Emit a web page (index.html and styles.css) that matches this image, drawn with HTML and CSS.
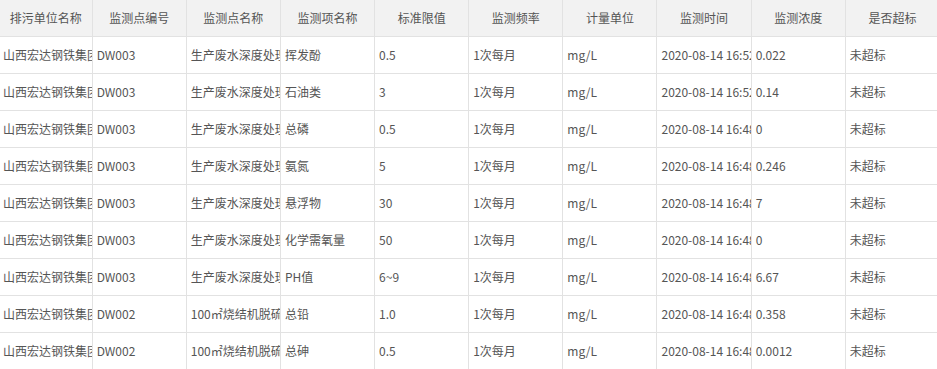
FILE: index.html
```html
<!DOCTYPE html>
<html>
<head>
<meta charset="utf-8">
<link rel="stylesheet" href="styles.css">
</head>
<body>
<table class="grid">
<colgroup>
<col class="c-first">
<col class="c"><col class="c"><col class="c"><col class="c"><col class="c"><col class="c"><col class="c"><col class="c"><col class="c">
</colgroup>
<thead>
<tr><th>排污单位名称</th><th>监测点编号</th><th>监测点名称</th><th>监测项名称</th><th>标准限值</th><th>监测频率</th><th>计量单位</th><th>监测时间</th><th>监测浓度</th><th>是否超标</th></tr>
</thead>
<tbody>
<tr><td>山西宏达钢铁集团有限公司</td><td>DW003</td><td>生产废水深度处理站</td><td>挥发酚</td><td>0.5</td><td>1次每月</td><td>mg/L</td><td>2020-08-14 16:52:00</td><td>0.022</td><td>未超标</td></tr>
<tr><td>山西宏达钢铁集团有限公司</td><td>DW003</td><td>生产废水深度处理站</td><td>石油类</td><td>3</td><td>1次每月</td><td>mg/L</td><td>2020-08-14 16:52:00</td><td>0.14</td><td>未超标</td></tr>
<tr><td>山西宏达钢铁集团有限公司</td><td>DW003</td><td>生产废水深度处理站</td><td>总磷</td><td>0.5</td><td>1次每月</td><td>mg/L</td><td>2020-08-14 16:48:00</td><td>0</td><td>未超标</td></tr>
<tr><td>山西宏达钢铁集团有限公司</td><td>DW003</td><td>生产废水深度处理站</td><td>氨氮</td><td>5</td><td>1次每月</td><td>mg/L</td><td>2020-08-14 16:48:00</td><td>0.246</td><td>未超标</td></tr>
<tr><td>山西宏达钢铁集团有限公司</td><td>DW003</td><td>生产废水深度处理站</td><td>悬浮物</td><td>30</td><td>1次每月</td><td>mg/L</td><td>2020-08-14 16:48:00</td><td>7</td><td>未超标</td></tr>
<tr><td>山西宏达钢铁集团有限公司</td><td>DW003</td><td>生产废水深度处理站</td><td>化学需氧量</td><td>50</td><td>1次每月</td><td>mg/L</td><td>2020-08-14 16:48:00</td><td>0</td><td>未超标</td></tr>
<tr><td>山西宏达钢铁集团有限公司</td><td>DW003</td><td>生产废水深度处理站</td><td>PH值</td><td>6~9</td><td>1次每月</td><td>mg/L</td><td>2020-08-14 16:48:00</td><td>6.67</td><td>未超标</td></tr>
<tr><td>山西宏达钢铁集团有限公司</td><td>DW002</td><td>100㎡烧结机脱硫系统</td><td>总铅</td><td>1.0</td><td>1次每月</td><td>mg/L</td><td>2020-08-14 16:48:00</td><td>0.358</td><td>未超标</td></tr>
<tr><td>山西宏达钢铁集团有限公司</td><td>DW002</td><td>100㎡烧结机脱硫系统</td><td>总砷</td><td>0.5</td><td>1次每月</td><td>mg/L</td><td>2020-08-14 16:48:00</td><td>0.0012</td><td>未超标</td></tr>
</tbody>
</table>
</body>
</html>
```
FILE: styles.css
```css
html, body {
  margin: 0;
  padding: 0;
  background: #fff;
  overflow: hidden;
}
body {
  font-family: "Noto Sans CJK SC", "Open Sans", sans-serif;
  font-size: 12px;
  color: #555;
}
.grid {
  table-layout: fixed;
  border-collapse: collapse;
  width: 940px;
}
.c-first { width: 92px; }
.c { width: 94px; }
.grid th, .grid td {
  border-right: 1px solid #e2e2e2;
  border-bottom: 1px solid #e2e2e2;
  white-space: nowrap;
  overflow: hidden;
  padding: 0 0 0 4px;
  font-weight: normal;
  line-height: 16px;
}
.grid th {
  height: 36px;
  background: #f2f2f2;
  text-align: center;
  padding: 0;
  color: #555;
}
.grid td {
  height: 36px;
  text-align: left;
}
.grid tr > :first-child { padding-left: 3px; }
.grid tr > th:first-child { padding-left: 0; }
```
